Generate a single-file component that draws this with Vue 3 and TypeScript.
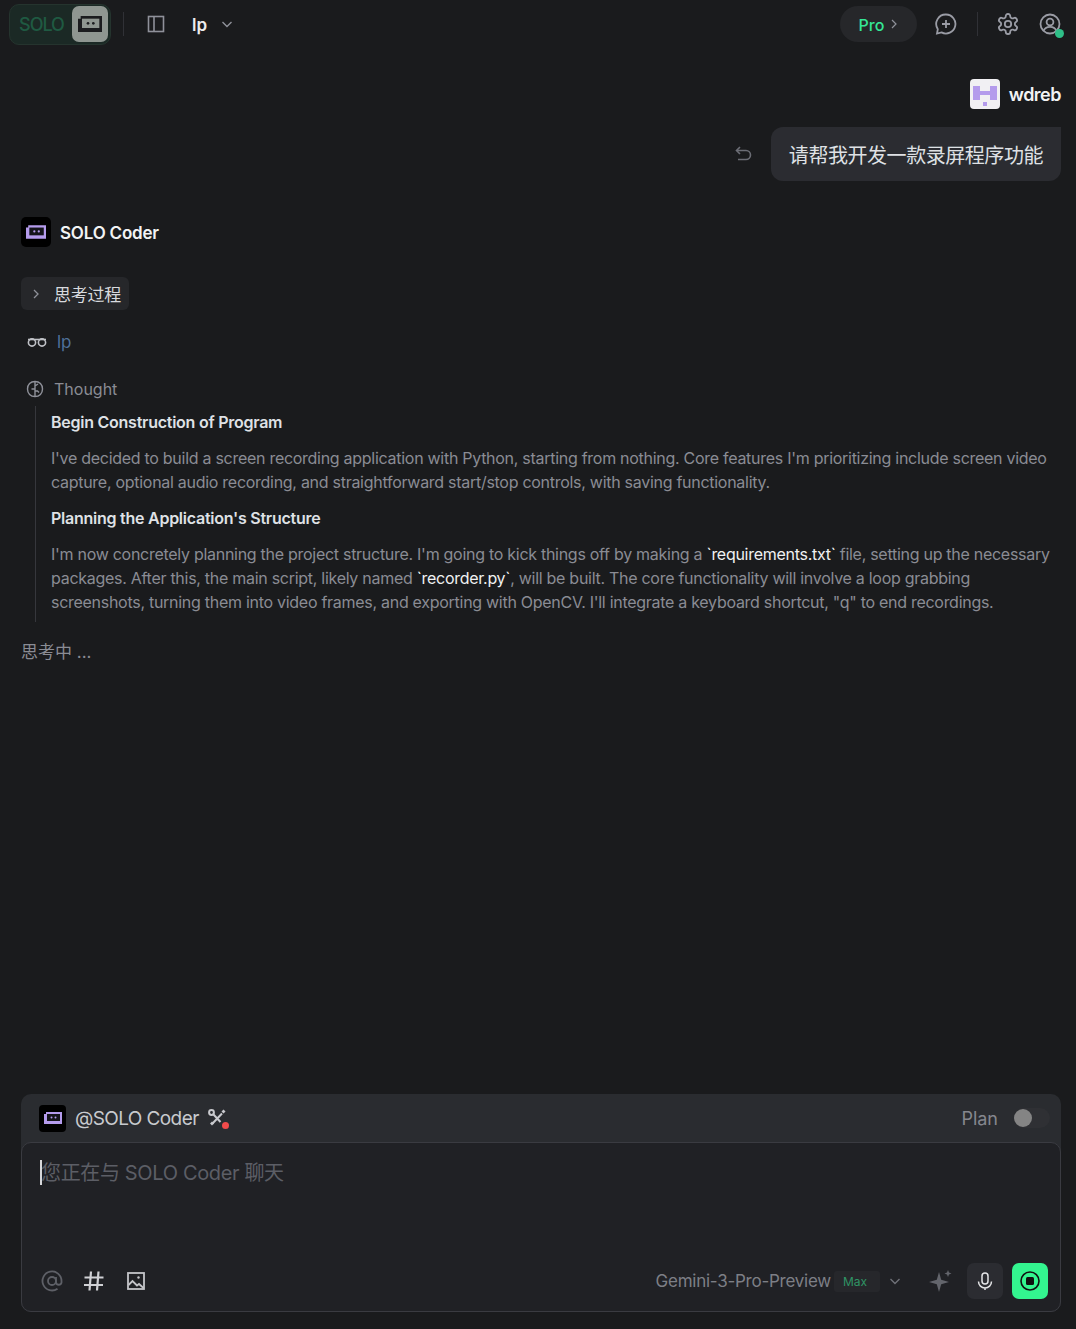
<template>
  <div class="page">
    <header class="topbar">
      <div class="mode">
        <span class="mode-label">SOLO</span>
        <span class="mode-icon">
          <svg width="24" height="16" viewBox="0 0 18 12"><path d="M2 0h16v12H0V2h2z" fill="#1b1c1f" /><rect x="3" y="2" width="13" height="7" fill="#8f9691" /><circle cx="7.500" cy="5.500" r="1" fill="#1b1c1f" /><circle cx="11.500" cy="5.500" r="1" fill="#1b1c1f" /></svg>
        </span>
      </div>
      <span class="divider" />
      <button class="icon-btn panel-btn" aria-label="Toggle panel">
        <svg width="20" height="20" viewBox="0 0 20 20" fill="none" stroke="#8f919a" stroke-width="1.600"><rect x="2.500" y="2.500" width="15" height="15" /><path d="M8 2.500v15" /></svg>
      </button>
      <span class="project">lp</span>
      <svg class="project-caret" width="12" height="12" viewBox="0 0 12 12" fill="none" stroke="#8f919a" stroke-width="1.400"><path d="M1.500 4l4.500 4.500L10.500 4" /></svg>
      <div class="spacer" />
      <button class="pro"><span class="pro-label">Pro</span>
        <svg width="8" height="12" viewBox="0 0 8 12" fill="none" stroke="#8f919a" stroke-width="1.200"><path d="M2 2l4 4-4 4" /></svg>
      </button>
      <button class="icon-btn chat-btn" aria-label="New chat">
        <svg width="24" height="24" viewBox="0 0 24 24" fill="none" stroke="#9a9ca5" stroke-width="1.800"><path d="M12 2.500a9.500 9.500 0 1 1-4.500 17.900L3 21.500l.8-4.300A9.500 9.500 0 0 1 12 2.500z" /><path d="M12 8v8M8 12h8" /></svg>
      </button>
      <span class="divider right" />
      <button class="icon-btn gear-btn" aria-label="Settings">
        <svg width="24" height="24" viewBox="0 0 24 24" fill="none" stroke="#9a9ca5" stroke-width="1.800"><path d="M12.220 2h-.44a2 2 0 0 0-2 2v.18a2 2 0 0 1-1 1.730l-.43.25a2 2 0 0 1-2 0l-.15-.08a2 2 0 0 0-2.730.73l-.22.38a2 2 0 0 0 .73 2.730l.15.1a2 2 0 0 1 1 1.720v.51a2 2 0 0 1-1 1.740l-.15.09a2 2 0 0 0-.73 2.730l.22.38a2 2 0 0 0 2.730.73l.15-.08a2 2 0 0 1 2 0l.43.25a2 2 0 0 1 1 1.730V20a2 2 0 0 0 2 2h.44a2 2 0 0 0 2-2v-.18a2 2 0 0 1 1-1.730l.43-.25a2 2 0 0 1 2 0l.15.08a2 2 0 0 0 2.730-.73l.22-.39a2 2 0 0 0-.73-2.730l-.15-.08a2 2 0 0 1-1-1.740v-.5a2 2 0 0 1 1-1.740l.15-.09a2 2 0 0 0 .73-2.730l-.22-.38a2 2 0 0 0-2.730-.73l-.15.08a2 2 0 0 1-2 0l-.43-.25a2 2 0 0 1-1-1.730V4a2 2 0 0 0-2-2z" /><circle cx="12" cy="12" r="3.200" /></svg>
      </button>
      <span class="user-btn">
        <svg width="22" height="22" viewBox="0 0 22 22" fill="none" stroke="#9a9ca5" stroke-width="1.800"><circle cx="11" cy="11" r="9.500" /><circle cx="11" cy="9" r="3.400" /><path d="M4.500 18c1-3 3.500-4.200 6.500-4.200s5.500 1.200 6.500 4.200" /></svg>
        <i class="online" />
      </span>
    </header>

    <main class="thread">
      <section class="user-msg">
        <div class="user-head">
          <span class="user-avatar">
            <svg width="30" height="30" viewBox="0 0 30 30"><path d="M3 7h7v5h10V7h7v14h-7v-5H10v5H3z" fill="#b49bec" /><rect x="13" y="23" width="4" height="4" fill="#b49bec" /></svg>
          </span>
          <span class="user-name">wdreb</span>
        </div>
        <div class="user-row">
          <svg class="undo" width="20" height="20" viewBox="0 0 20 20" fill="none" stroke="#6b6d75" stroke-width="1.600"><path d="M6 3L2.500 6.500 6 10" /><path d="M3 6.500h9a4.500 4.500 0 0 1 0 9H4" /></svg>
          <div class="bubble">请帮我开发一款录屏程序功能</div>
        </div>
      </section>

      <section class="agent">
        <div class="agent-head">
          <span class="agent-avatar">
            <svg width="20" height="14" viewBox="0 0 18 12"><path d="M2 0h16v12H0V2h2z" fill="#b49bec" /><rect x="3" y="2" width="13" height="7" fill="#14141a" /><circle cx="7.500" cy="5.500" r="1" fill="#b49bec" /><circle cx="11.500" cy="5.500" r="1" fill="#b49bec" /></svg>
          </span>
          <span class="agent-name">SOLO Coder</span>
        </div>

        <button class="process">
          <svg width="8" height="12" viewBox="0 0 8 12" fill="none" stroke="#8f919a" stroke-width="1.300"><path d="M2 2l4 4-4 4" /></svg>
          <span>思考过程</span>
        </button>

        <div class="ref-row">
          <svg width="20" height="10" viewBox="0 0 20 10" fill="none" stroke="#c0c2c7" stroke-width="1.600"><circle cx="5" cy="5.500" r="3.600" /><circle cx="15" cy="5.500" r="3.600" /><path d="M1 2.500h18" /></svg>
          <span class="ref-name">lp</span>
        </div>

        <div class="thought-head">
          <svg width="18" height="18" viewBox="0 0 18 18" fill="none" stroke="#8f919a" stroke-width="1.400"><path d="M9 1.500c4.500 0 7.500 3 7.500 7.500s-3 7.500-7.500 7.500S1.500 13.500 1.500 9 4.500 1.500 9 1.500z" /><path d="M9 2v14M9 9H5.500M9 6l3-2M9 11h2.500l1.500 1.500" /></svg>
          <span>Thought</span>
        </div>

        <div class="thought-body">
          <h4>Begin Construction of Program</h4>
          <p>I've decided to build a screen recording application with Python, starting from nothing. Core features I'm prioritizing include screen video capture, optional audio recording, and straightforward start/stop controls, with saving functionality.</p>
          <h4>Planning the Application's Structure</h4>
          <p>I'm now concretely planning the project structure. I'm going to kick things off by making a <b>`requirements.txt`</b> file, setting up the necessary packages. After this, the main script, likely named <b>`recorder.py`</b>, will be built. The core functionality will involve a loop grabbing screenshots, turning them into video frames, and exporting with OpenCV. I'll integrate a keyboard shortcut, "q" to end recordings.</p>
        </div>

        <div class="thinking">思考中 ...</div>
      </section>
    </main>

    <section class="composer">
      <div class="composer-head">
        <span class="composer-avatar">
          <svg width="18" height="12" viewBox="0 0 18 12"><path d="M2 0h16v12H0V2h2z" fill="#b49bec" /><rect x="3" y="2" width="13" height="7" fill="#14141a" /><circle cx="7.500" cy="5.500" r="1" fill="#b49bec" /><circle cx="11.500" cy="5.500" r="1" fill="#b49bec" /></svg>
        </span>
        <span class="composer-agent">@SOLO Coder</span>
        <span class="tools">
          <svg width="20" height="20" viewBox="0 0 20 20" fill="none" stroke="#c9cace" stroke-width="2"><circle cx="4.500" cy="4.500" r="2.400" /><path d="M6.500 6.500l7 7.500M15 5.500l-9.500 10" /><path d="M15.500 2.500l2 2" stroke-width="2.800" /><path d="M4 14.500l2 2" stroke-width="2.800" /></svg>
          <i class="tools-dot" />
        </span>
        <div class="spacer" />
        <span class="plan">Plan</span>
        <span class="switch"><i /></span>
      </div>
      <div class="composer-body">
        <div class="input-line">
          <i class="caret" />
          <span class="placeholder">您正在与 SOLO Coder 聊天</span>
        </div>
        <div class="composer-foot">
          <svg class="foot-icon at" width="22" height="22" viewBox="0 0 22 22" fill="none" stroke="#5e6067" stroke-width="1.800"><circle cx="11" cy="11" r="4" /><path d="M15 7v5.500a2.800 2.800 0 0 0 5.500 0V11a9.500 9.500 0 1 0-4 7.700" /></svg>
          <svg class="foot-icon hash" width="22" height="22" viewBox="0 0 22 22" fill="none" stroke="#d0d1d5" stroke-width="2.200"><path d="M8 1.500L6.500 20.500M15.500 1.500L14 20.500M1.500 7.500h19M1 15h19" /></svg>
          <svg class="foot-icon img" width="20" height="20" viewBox="0 0 20 20" fill="none" stroke="#c4c5c9" stroke-width="1.800"><rect x="2" y="2" width="16" height="16" /><path d="M2.500 14l4-4 4.500 4.500 2-1.500 4.500 4" /><circle cx="12.500" cy="6.500" r="1.200" fill="#c4c5c9" stroke="none" /></svg>
          <div class="spacer" />
          <span class="model">Gemini-3-Pro-Preview</span>
          <span class="max">Max</span>
          <svg class="model-caret" width="12" height="12" viewBox="0 0 12 12" fill="none" stroke="#6f7178" stroke-width="1.400"><path d="M1.500 4l4.500 4.500L10.500 4" /></svg>
          <svg class="sparkle" width="24" height="24" viewBox="0 0 24 24" fill="#63656c"><path d="M10 3l2.200 7.800L20 13l-7.800 2.200L10 23l-2.200-7.800L0 13l7.800-2.200z" /><path d="M19 1l1 2.500 2.500 1-2.500 1-1 2.500-1-2.500-2.500-1 2.500-1z" /></svg>
          <button class="mic" aria-label="Voice">
            <svg width="20" height="20" viewBox="0 0 20 20" fill="none" stroke="#e3e4e6" stroke-width="1.500"><rect x="7" y="2" width="6" height="11" rx="3" /><path d="M3.500 10.500a6.500 6.500 0 0 0 13 0M10 17v2" /></svg>
          </button>
          <button class="stop" aria-label="Stop">
            <svg width="22" height="22" viewBox="0 0 22 22"><circle cx="11" cy="11" r="9" fill="none" stroke="#111" stroke-width="1.600" /><rect x="7" y="7" width="8" height="8" rx="1.500" fill="#111" /></svg>
          </button>
        </div>
      </div>
    </section>
  </div>
</template>

<script setup lang="ts">
</script>

<style>
html,
body {
  margin: 0;
  background: #1a1b1d;
}
</style>

<style scoped>
.page {
  height: 1329px;
  display: flex;
  flex-direction: column;
  overflow: hidden;
  background: #1a1b1d;
  color: #e4e5e7;
  font-family: Inter, "Noto Sans CJK SC", sans-serif;
  font-size: 16px;
}

button {
  border: 0;
  padding: 0;
  background: none;
  color: inherit;
  font: inherit;
}

.spacer {
  flex: 1;
}

.topbar {
  height: 48px;
  flex: none;
  display: flex;
  align-items: center;
  box-sizing: border-box;
  padding: 0 15px 0 9px;
}

.mode {
  width: 102px;
  height: 41px;
  box-sizing: border-box;
  display: flex;
  align-items: center;
  justify-content: space-between;
  padding: 0 2px 0 9px;
  border: 1px solid #25342e;
  border-radius: 10px;
  background: #1b2925;
}

.mode-label {
  padding-top: 1px;
  color: #1f5a42;
  font-size: 18px;
  font-weight: 500;
  letter-spacing: -1px;
}

.mode-icon {
  width: 36px;
  height: 36px;
  display: flex;
  align-items: center;
  justify-content: center;
  border-radius: 7px;
  background: #8f9691;
}

.divider {
  width: 1px;
  height: 24px;
  margin-left: 12px;
  background: #303136;
}

.icon-btn {
  display: flex;
}

.panel-btn {
  margin-left: 22px;
}

.project {
  margin-left: 26px;
  padding-top: 1px;
  font-size: 17px;
  font-weight: 600;
  color: #eceded;
}

.project-caret {
  margin-left: 14px;
}

.pro {
  width: 77px;
  height: 36px;
  display: flex;
  align-items: center;
  justify-content: center;
  gap: 6px;
  border-radius: 18px;
  background: #26272a;
  color: #35e696;
  font-size: 16px;
  font-weight: 500;
}

.pro-label {
  padding-top: 1px;
}

.chat-btn {
  margin-left: 17px;
}

.divider.right {
  margin-left: 19px;
}

.gear-btn {
  margin-left: 18px;
}

.user-btn {
  position: relative;
  display: flex;
  margin-left: 19px;
}

.online {
  position: absolute;
  right: -3px;
  bottom: -3px;
  width: 9px;
  height: 9px;
  border-radius: 50%;
  background: #2fbf88;
}

.thread {
  flex: 1;
  min-height: 0;
  padding: 0 15px 0 21px;
}

.user-msg {
  display: flex;
  flex-direction: column;
  align-items: flex-end;
  padding-top: 31px;
}

.user-head {
  display: flex;
  align-items: center;
  gap: 9px;
}

.user-avatar {
  width: 30px;
  height: 30px;
  border-radius: 4px;
  background: #f1f0f3;
  display: flex;
}

.user-name {
  font-size: 18px;
  font-weight: 600;
  letter-spacing: -0.5px;
  color: #f2f3f4;
}

.user-row {
  display: flex;
  align-items: center;
  gap: 17px;
  margin-top: 18px;
}

.undo {
  display: block;
}

.bubble {
  height: 54px;
  display: flex;
  align-items: center;
  padding: 0 18px;
  border-radius: 12px 0 12px 12px;
  background: #2b2c31;
  font-size: 20px;
  letter-spacing: -0.45px;
  color: #dfe1e5;
}

.agent {
  padding-top: 36px;
}

.agent-head {
  display: flex;
  align-items: center;
  gap: 9px;
}

.agent-avatar {
  width: 30px;
  height: 30px;
  display: flex;
  align-items: center;
  justify-content: center;
  border-radius: 5px;
  background: #000;
}

.agent-name {
  padding-top: 2px;
  font-size: 17px;
  font-weight: 600;
  letter-spacing: -0.2px;
  color: #f2f3f4;
}

.process {
  height: 33px;
  display: flex;
  align-items: center;
  gap: 14px;
  margin-top: 30px;
  padding: 0 8px 0 11px;
  border-radius: 6px;
  background: #26272a;
  font-size: 17px;
  letter-spacing: -0.25px;
  color: #d8dade;
}

.ref-row {
  display: flex;
  align-items: center;
  gap: 10px;
  height: 24px;
  margin: 20px 0 0 6px;
  font-size: 17px;
}

.ref-name {
  color: #4f709a;
}

.thought-head {
  display: flex;
  align-items: center;
  gap: 10px;
  height: 24px;
  margin: 23px 0 0 5px;
  font-size: 16px;
  color: #8a8c94;
}

.thought-body {
  margin: 5px 0 0 14px;
  padding: 4px 0 8px 15px;
  border-left: 1px solid #36373c;
  font-size: 16px;
  line-height: 24px;
  letter-spacing: -0.28px;
}

.thought-body h4 {
  margin: 0 0 12px;
  font-size: 16px;
  font-weight: 600;
  letter-spacing: -0.25px;
  color: #dfe1e5;
}

.thought-body p {
  margin: 0 0 12px;
  color: #8a8c94;
}

.thought-body p:last-child {
  margin-bottom: 0;
}

.thought-body b {
  font-weight: 400;
  color: #f0f1f2;
}

.thinking {
  margin-top: 18px;
  font-size: 17px;
  line-height: 24px;
  color: #8a8c94;
}

.composer {
  flex: none;
  margin: 0 15px 17px 21px;
  height: 218px;
  display: flex;
  flex-direction: column;
  border-radius: 10px;
  background: #2a2c30;
}

.composer-head {
  height: 48px;
  flex: none;
  display: flex;
  align-items: center;
  padding: 0 11px 0 18px;
}

.composer-avatar {
  width: 27px;
  height: 27px;
  display: flex;
  align-items: center;
  justify-content: center;
  border-radius: 4px;
  background: #000;
}

.composer-agent {
  margin-left: 9px;
  font-size: 19px;
  letter-spacing: -0.6px;
  color: #c8cace;
}

.tools {
  position: relative;
  display: flex;
  margin-left: 8px;
}

.tools-dot {
  position: absolute;
  right: -2px;
  bottom: -1px;
  width: 7px;
  height: 7px;
  border-radius: 50%;
  background: #f24b4b;
}

.plan {
  font-size: 18px;
  margin-right: 0;
  color: #85878e;
}

.switch {
  width: 36px;
  height: 20px;
  margin-left: 16px;
  border-radius: 10px;
  background: #2f3034;
  display: flex;
  align-items: center;
}

.switch i {
  width: 18px;
  height: 18px;
  border-radius: 50%;
  background: #848484;
}

.composer-body {
  flex: 1;
  display: flex;
  flex-direction: column;
  border: 1px solid #3a3b41;
  border-radius: 10px;
  background: #202125;
}

.input-line {
  position: relative;
  padding: 17px 18px 0 19px;
  height: 26px;
  font-size: 20px;
  line-height: 26px;
  letter-spacing: -0.35px;
  color: #5c5e66;
}

.caret {
  position: absolute;
  left: 18px;
  top: 17px;
  width: 2px;
  height: 25px;
  background: #d6d7da;
}

.composer-foot {
  margin-top: auto;
  height: 36px;
  display: flex;
  align-items: center;
  padding: 0 12px 12px 19px;
}

.foot-icon {
  flex: none;
}

.hash {
  margin-left: 20px;
}

.img {
  margin-left: 21px;
}

.model {
  font-size: 17px;
  letter-spacing: -0.25px;
  color: #7d7f86;
}

.max {
  width: 46px;
  height: 21px;
  box-sizing: border-box;
  padding-right: 4px;
  display: flex;
  align-items: center;
  justify-content: center;
  margin-left: 3px;
  border-radius: 3px;
  background: #26272b;
  color: #2f9465;
  font-size: 12px;
}

.model-caret {
  margin-left: 9px;
}

.sparkle {
  margin-left: 28px;
}

.mic {
  width: 36px;
  height: 36px;
  margin-left: 14px;
  display: flex;
  align-items: center;
  justify-content: center;
  border-radius: 7px;
  background: #2b2c31;
}

.stop {
  width: 36px;
  height: 36px;
  margin-left: 9px;
  display: flex;
  align-items: center;
  justify-content: center;
  border-radius: 7px;
  background: #33f58f;
}
</style>
